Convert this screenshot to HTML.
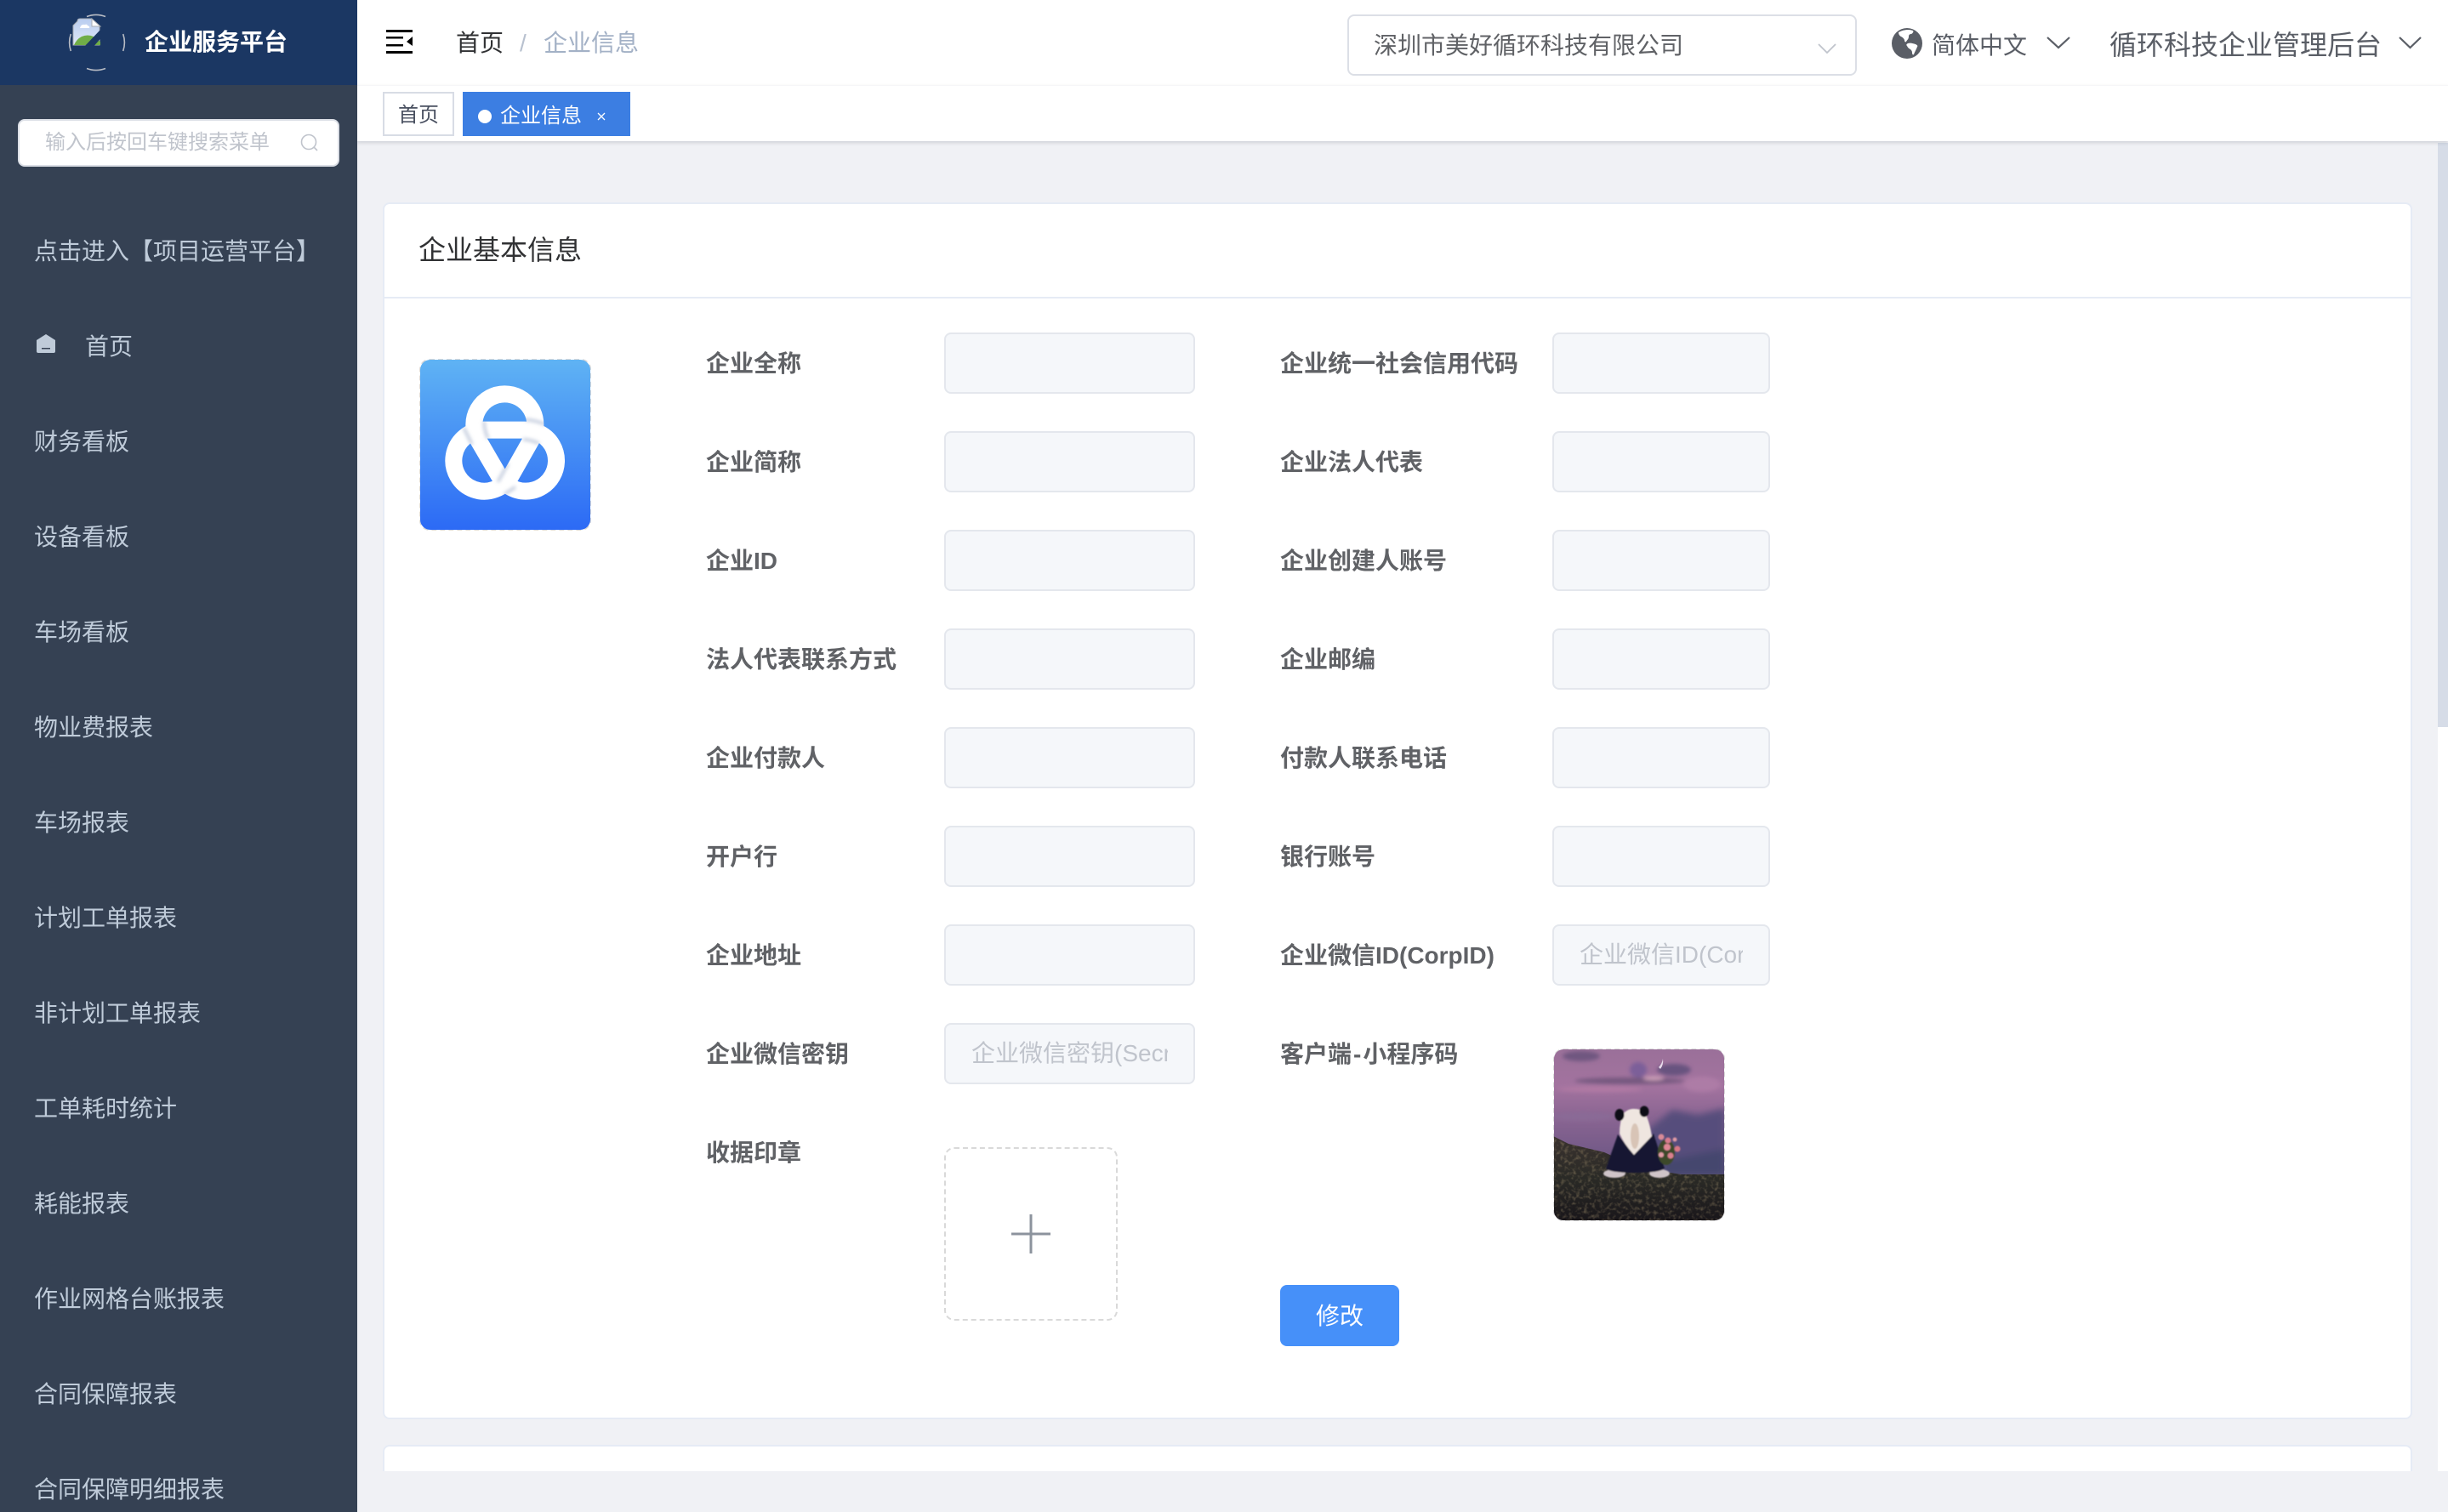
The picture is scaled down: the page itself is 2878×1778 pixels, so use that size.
<!DOCTYPE html>
<html lang="zh-CN">
<head>
<meta charset="utf-8">
<title>企业信息</title>
<style>
html,body{margin:0;padding:0;width:2878px;height:1778px;overflow:hidden;background:#f0f1f5;font-family:"Liberation Sans","Noto Sans CJK SC",sans-serif;}
*{box-sizing:border-box}
.a{position:absolute}
.t{position:absolute;white-space:nowrap;line-height:40px;height:40px;margin-top:1px}
.m{color:#bfcbd9;font-size:28px;left:40px}
.l{color:#606266;font-size:28px;font-weight:700}
.i{position:absolute;height:72px;background:#f5f7fa;border:2px solid #e4e7ed;border-radius:8px;overflow:hidden;color:#c0c4cc;font-size:28px;line-height:68px;white-space:nowrap}
.c1{left:1110px;width:295px}
.c2{left:1825px;width:256px}
.i span{display:block;margin:0 30px;overflow:hidden}
</style>
</head>
<body>
<!-- main cards -->
<div class="a" style="left:450px;top:238px;width:2386px;height:1431px;background:#fff;border:2px solid #e6ebf5;border-radius:8px"></div>
<div class="a" style="left:452px;top:349px;width:2382px;height:2px;background:#e6ebf5"></div>
<div class="a" style="left:450px;top:1699px;width:2386px;height:60px;background:#fff;border:2px solid #e6ebf5;border-radius:8px"></div>
<div class="a" style="left:420px;top:1730px;width:2458px;height:48px;background:#f0f1f5"></div>
<!-- scrollbar -->
<div class="a" style="left:2866px;top:168px;width:12px;height:1562px;background:#fff"></div>
<div class="a" style="left:2866px;top:168px;width:12px;height:687px;background:#d6dce7"></div>

<!-- header -->
<div class="a" style="left:420px;top:0;width:2458px;height:100px;background:#fff;box-shadow:0 2px 8px rgba(0,21,41,.08)"></div>
<div class="a" style="left:420px;top:100px;width:2458px;height:66px;background:#fff;border-top:1px solid #f6f6f8;box-shadow:0 2px 4px rgba(0,21,41,.14)"></div>

<svg class="a" style="left:454px;top:35px" width="32" height="28" viewBox="0 0 32 28"><path fill="#000" d="M0 0h31v3H0zM0 8h20v2.500H0zM0 17h20v2.500H0zM0 25h31v3H0zM24 14l7-6v11z"/></svg>
<div class="t" style="left:536px;top:30px;font-size:28px;color:#303133">首页</div>
<div class="t" style="left:611px;top:30px;font-size:28px;color:#b8c1cf">/</div>
<div class="t" style="left:639px;top:30px;font-size:28px;color:#a3b1c6">企业信息</div>

<!-- select -->
<div class="a" style="left:1584px;top:17px;width:599px;height:72px;background:#fff;border:2px solid #dcdfe6;border-radius:8px"></div>
<div class="t" style="left:1615px;top:33px;font-size:28px;color:#606266">深圳市美好循环科技有限公司</div>
<svg class="a" style="left:2137px;top:50px" width="22" height="14" viewBox="0 0 22 14"><path d="M1 2l10 10L21 2" fill="none" stroke="#c0c4cc" stroke-width="1.800"/></svg>

<!-- globe -->
<svg class="a" style="left:2223px;top:32px" width="38" height="38" viewBox="0 0 38 38"><circle cx="19" cy="19" r="18" fill="#5a5e66"/><path fill="#fff" d="M9 6c5-3 12-4 17-2 1 1 0 3-2 4-2 0-3 1-3 3 0 3-2 4-3 6-1 1-2 0-2-2-1-2-2-3-4-4-2-1-3-3-3-5zM20 19c3-1 6 0 9 1 2 1 3 2 2 3-1 3-3 6-4 9-1 1-2 0-2-2 0-2-1-3-2-4-2-1-3-2-4-4-1-1-1-2 1-3z"/></svg>
<div class="t" style="left:2271px;top:33px;font-size:28px;color:#5a5e66">简体中文</div>
<svg class="a" style="left:2406px;top:42px" width="28" height="16" viewBox="0 0 28 16"><path d="M1 2l13 12L27 2" fill="none" stroke="#5a5e66" stroke-width="2.200"/></svg>
<div class="t" style="left:2480px;top:32px;font-size:32px;color:#5a5e66">循环科技企业管理后台</div>
<svg class="a" style="left:2820px;top:42px" width="27" height="16" viewBox="0 0 27 16"><path d="M1 2l12.500 12L26 2" fill="none" stroke="#5a5e66" stroke-width="2.200"/></svg>

<!-- tags -->
<div class="a" style="left:450px;top:108px;width:84px;height:52px;background:#fff;border:2px solid #d8dce5;color:#495060;font-size:24px;line-height:52px;text-align:center">首页</div>
<div class="a" style="left:544px;top:108px;width:197px;height:52px;background:#3c7ee2"></div>
<div class="a" style="left:562px;top:129px;width:16px;height:16px;border-radius:50%;background:#fff"></div>
<div class="t" style="left:588px;top:116px;font-size:24px;color:#fff">企业信息</div>
<svg class="a" style="left:702px;top:132px" width="10" height="10" viewBox="0 0 10 10"><path d="M1 1l8 8M9 1L1 9" stroke="#fff" stroke-width="1.300"/></svg>

<!-- sidebar -->
<div class="a" style="left:0;top:0;width:420px;height:1778px;background:#354153"></div>
<div class="a" style="left:0;top:0;width:420px;height:100px;background:#1b3763"></div>
<svg class="a" style="left:80px;top:15px" width="70" height="70" viewBox="0 0 70 70">
<path d="M22 4.500a31 31 0 0 1 22 0M22 65.500a31 31 0 0 0 22 0M3.300 25a31 31 0 0 0 0 20M64.700 25a31 31 0 0 1 0 20" fill="none" stroke="#b9bdc5" stroke-width="1.600"/>
<defs><linearGradient id="sk" x1="0" y1="0" x2="0" y2="1"><stop offset="0" stop-color="#b9cdf0"/><stop offset="1" stop-color="#dfe7f7"/></linearGradient></defs>
<path d="M12 10q0-3 3-3h13l10 9v22H7V15z" fill="url(#sk)" transform="translate(-1,0)" stroke="#a9adb3" stroke-width="1"/>
<path d="M28 7v9h10z" fill="#fdfdfd" stroke="#a9adb3" stroke-width="1"/>
<path d="M14 18q1-5 6-4 2-1 3 1 3 1 2 3z" fill="#fff"/>
<path d="M7 38q3-7 9-10 7-3 14 0l8 6v4z" fill="#70ad47"/>
<path d="M38 20L17 42h11L42 26z" fill="#1b3763"/>
</svg>
<div class="t" style="left:170px;top:29px;font-size:28px;font-weight:700;color:#fff">企业服务平台</div>

<div class="a" style="left:21px;top:140px;width:378px;height:56px;background:#fff;border:2px solid #dcdfe6;border-radius:8px"></div>
<div class="t" style="left:53px;top:147px;font-size:24px;color:#c0c4cc">输入后按回车键搜索菜单</div>
<svg class="a" style="left:353px;top:157px" width="22" height="22" viewBox="0 0 22 22"><circle cx="10" cy="10" r="8.500" fill="none" stroke="#c0c4cc" stroke-width="1.600"/><path d="M16 16l4 4" stroke="#c0c4cc" stroke-width="1.600"/></svg>

<div class="t m" style="top:275px">点击进入【项目运营平台】</div>
<svg class="a" style="left:43px;top:393px" width="22" height="22" viewBox="0 0 22 22"><path d="M11 0L22 7v13q0 2-2 2H2q-2 0-2-2V7z" fill="#bfcbd9"/><path d="M6 16h10v1.500H6z" fill="#354153"/></svg>
<div class="t m" style="left:100px;top:387px">首页</div>
<div class="t m" style="top:499px">财务看板</div>
<div class="t m" style="top:611px">设备看板</div>
<div class="t m" style="top:723px">车场看板</div>
<div class="t m" style="top:835px">物业费报表</div>
<div class="t m" style="top:947px">车场报表</div>
<div class="t m" style="top:1059px">计划工单报表</div>
<div class="t m" style="top:1171px">非计划工单报表</div>
<div class="t m" style="top:1283px">工单耗时统计</div>
<div class="t m" style="top:1395px">耗能报表</div>
<div class="t m" style="top:1507px">作业网格台账报表</div>
<div class="t m" style="top:1619px">合同保障报表</div>
<div class="t m" style="top:1731px">合同保障明细报表</div>

<!-- card content -->
<div class="t" style="left:492px;top:273px;font-size:32px;color:#303133">企业基本信息</div>

<!-- logo -->
<div class="a" style="left:493px;top:422px;width:202px;height:202px;border:2px dashed #d9d9d9;border-radius:12px"></div>
<div class="a" style="left:494px;top:423px;width:200px;height:200px;border-radius:12px;background:linear-gradient(180deg,#5fb3f4 0%,#2c6af5 100%)"></div>
<svg class="a" style="left:510px;top:440px" width="170" height="160" viewBox="0 0 510 480">
<defs>
<mask id="kn" maskUnits="userSpaceOnUse" x="0" y="0" width="510" height="480"><path d="M178 197H324A108 108 0 1 1 230.700 359.300L156.700 232.300A108 108 0 1 1 344 231.200L272 358.200A108 108 0 1 1 178 197Z" fill="none" stroke="#fff" stroke-width="60"/></mask>
<filter id="bl" x="-50%" y="-50%" width="200%" height="200%"><feGaussianBlur stdDeviation="6"/></filter>
</defs>
<path d="M178 197H324A108 108 0 1 1 230.700 359.300L156.700 232.300A108 108 0 1 1 344 231.200L272 358.200A108 108 0 1 1 178 197Z" fill="none" stroke="#fff" stroke-width="60"/>
<g mask="url(#kn)" fill="none" stroke="#8194b8" stroke-opacity=".55" stroke-width="9" filter="url(#bl)">
<path d="M320 160Q360 162 395 178"/>
<path d="M315 230Q345 232 372 245"/>
<path d="M178 165Q176 195 192 228"/>
<path d="M105 188L135 248"/>
<path d="M262 315L226 380"/>
<path d="M248 425L288 398"/>
</g>
</svg>

<!-- form rows left -->
<div class="t l" style="left:830px;top:407px">企业全称</div><div class="i c1" style="top:391px"></div>
<div class="t l" style="left:830px;top:523px">企业简称</div><div class="i c1" style="top:507px"></div>
<div class="t l" style="left:830px;top:639px">企业ID</div><div class="i c1" style="top:623px"></div>
<div class="t l" style="left:830px;top:755px">法人代表联系方式</div><div class="i c1" style="top:739px"></div>
<div class="t l" style="left:830px;top:871px">企业付款人</div><div class="i c1" style="top:855px"></div>
<div class="t l" style="left:830px;top:987px">开户行</div><div class="i c1" style="top:971px"></div>
<div class="t l" style="left:830px;top:1103px">企业地址</div><div class="i c1" style="top:1087px"></div>
<div class="t l" style="left:830px;top:1219px">企业微信密钥</div><div class="i c1" style="top:1203px"><span>企业微信密钥(Secret)</span></div>
<div class="t l" style="left:830px;top:1335px">收据印章</div>

<!-- form rows right -->
<div class="t l" style="left:1505px;top:407px">企业统一社会信用代码</div><div class="i c2" style="top:391px"></div>
<div class="t l" style="left:1505px;top:523px">企业法人代表</div><div class="i c2" style="top:507px"></div>
<div class="t l" style="left:1505px;top:639px">企业创建人账号</div><div class="i c2" style="top:623px"></div>
<div class="t l" style="left:1505px;top:755px">企业邮编</div><div class="i c2" style="top:739px"></div>
<div class="t l" style="left:1505px;top:871px">付款人联系电话</div><div class="i c2" style="top:855px"></div>
<div class="t l" style="left:1505px;top:987px">银行账号</div><div class="i c2" style="top:971px"></div>
<div class="t l" style="left:1505px;top:1103px">企业微信ID(CorpID)</div><div class="i c2" style="top:1087px"><span>企业微信ID(CorpID)</span></div>
<div class="t l" style="left:1505px;top:1219px">客户端<span style="margin:0 2px">-</span>小程序码</div>

<!-- upload -->
<div class="a" style="left:1110px;top:1349px;width:204px;height:204px;border:2px dashed #d9d9d9;border-radius:12px"></div>
<svg class="a" style="left:1189px;top:1428px" width="46" height="46" viewBox="0 0 46 46"><path d="M0 23h46" stroke="#8c939d" stroke-width="3"/><path d="M23 0v46" stroke="#8c939d" stroke-width="3"/></svg>

<!-- panda -->
<div class="a" style="left:1826px;top:1233px;width:202px;height:203px;border:2px dashed #d9d9d9;border-radius:12px"></div>
<svg class="a" style="left:1827px;top:1234px;border-radius:11px" width="200" height="201" viewBox="1 1 200 201">
<defs>
<linearGradient id="sky" x1="0" y1="0" x2="0" y2="1"><stop offset="0" stop-color="#9a7099"/><stop offset=".22" stop-color="#a3739f"/><stop offset=".4" stop-color="#8a6592"/><stop offset=".6" stop-color="#745a88"/><stop offset=".8" stop-color="#5f5479"/></linearGradient>
<filter id="b4"><feGaussianBlur stdDeviation="4"/></filter>
<filter id="b3"><feGaussianBlur stdDeviation="2.500"/></filter>
<filter id="b1"><feGaussianBlur stdDeviation=".8"/></filter>
<filter id="gr" x="0" y="0" width="100%" height="100%"><feTurbulence type="fractalNoise" baseFrequency=".22" numOctaves="2" seed="7"/><feColorMatrix values="0 0 0 0 .55  0 0 0 0 .42  0 0 0 0 .22  1.800 0 0 0 -.85"/></filter>
<clipPath id="hc"><path d="M0 103L18 112 60 122 70 145 130 145 150 148 202 148V202H0z"/></clipPath>
<linearGradient id="hill" x1="0" y1="0" x2="0" y2="1"><stop offset="0" stop-color="#3a322f"/><stop offset=".5" stop-color="#2a2a26"/><stop offset="1" stop-color="#19161a"/></linearGradient>
</defs>
<rect width="202" height="202" fill="url(#sky)"/>
<g filter="url(#b3)">
<ellipse cx="33" cy="9" rx="22" ry="6" fill="#6f5680"/>
<ellipse cx="142" cy="25" rx="20" ry="7" fill="#67527f"/>
<ellipse cx="100" cy="25" rx="10" ry="9" fill="#7b5f99"/>
<ellipse cx="90" cy="38" rx="65" ry="4" fill="#76597f"/>
<ellipse cx="55" cy="48" rx="50" ry="3" fill="#b27aa4"/>
<ellipse cx="175" cy="42" rx="22" ry="9" fill="#ad7ba6"/>
<ellipse cx="118" cy="35" rx="12" ry="2.500" fill="#cda0b8"/>
<ellipse cx="35" cy="80" rx="38" ry="5" fill="#8a6a96"/>
</g>
<g filter="url(#b4)">
<path d="M112 95L140 72 170 78 202 70V145H112z" fill="#574d7b"/>
<path d="M130 132L202 118V150H130z" fill="#45476e"/>
</g>
<path d="M124 22q4-4 5-10 1 7-3 12z" fill="#e7dcec"/>
<path d="M0 103L18 112 60 122 100 140 150 148 202 148V202H0z" fill="url(#hill)"/>
<g clip-path="url(#hc)">
<rect x="0" y="100" width="202" height="102" filter="url(#gr)" opacity=".5"/>
</g>
<g filter="url(#b1)">
<ellipse cx="72" cy="147" rx="13" ry="5" fill="#cfc4c8"/>
<ellipse cx="125" cy="147" rx="12" ry="5" fill="#cfc4c8"/>
<path d="M76 101L62 141Q66 146 96 146 126 146 131 141L118 100 95 125z" fill="#171833"/>
<path d="M78 100Q78 85 83 76 89 70 96 71 106 71 110 80 114 90 116 103L95 125Q83 112 78 100z" fill="#efe6e0"/>
<ellipse cx="96" cy="103" rx="5" ry="15" fill="#d8c4b6"/>
<ellipse cx="78" cy="78" rx="5.500" ry="7" fill="#0f0d12"/>
<ellipse cx="107" cy="74" rx="5.500" ry="6.500" fill="#0f0d12"/>
<ellipse cx="133" cy="122" rx="10" ry="15" fill="#3c4a2c"/>
<circle cx="127" cy="104" r="3.500" fill="#d88a97"/><circle cx="135" cy="108" r="3.500" fill="#d87c8e"/><circle cx="143" cy="107" r="2.500" fill="#e09aa5"/><circle cx="134" cy="116" r="4" fill="#e08795"/><circle cx="146" cy="118" r="3.500" fill="#d97886"/><circle cx="127" cy="125" r="3" fill="#e29ba6"/><circle cx="138" cy="126" r="3.500" fill="#d97f8e"/>
</g>
</svg>

<!-- button -->
<div class="a" style="left:1505px;top:1511px;width:140px;height:72px;background:#4690f9;border-radius:8px;color:#fff;font-size:28px;line-height:74px;text-align:center">修改</div>
</body>
</html>
